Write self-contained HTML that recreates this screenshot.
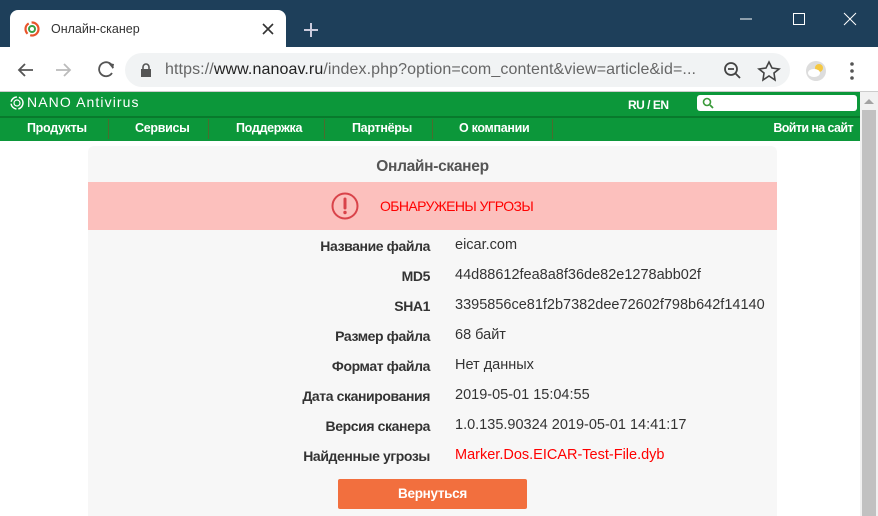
<!DOCTYPE html>
<html><head><meta charset="utf-8"><style>
*{margin:0;padding:0;box-sizing:border-box}
body{width:878px;height:516px;overflow:hidden;font-family:"Liberation Sans",sans-serif;background:#fff;position:relative}
.abs{position:absolute}
.top{left:0;top:0;width:878px;height:47px;background:#1e3f5a}
.tab{left:10px;top:10px;width:276px;height:37px;background:#fff;border-radius:8px 8px 0 0}
.tab span{position:absolute;left:41px;top:12px;font-size:12.5px;color:#333}
.tb{left:0;top:47px;width:878px;height:45px;background:#fff;border-bottom:1px solid #ccc}
.omni{left:125px;top:53px;width:665px;height:34px;background:#f1f3f4;border-radius:17px}
.url{left:165px;top:61px;font-size:16px;color:#666;letter-spacing:0.1px}
.url b{font-weight:normal;color:#222}
.g1{left:0;top:92px;width:860px;height:24px;background:#0c973a}
.g2{left:0;top:116px;width:860px;height:25px;background:#0c973a;border-top:2px solid #087a2c}
.nav{top:121px;font-size:12.5px;color:#fff;font-weight:bold;letter-spacing:-0.3px}
.sep{top:119px;width:1px;height:20px;background:#4a6d2e}
.sb{left:860px;top:92px;width:18px;height:424px;background:#f1f1f1}
.thumb{left:862px;top:110px;width:14px;height:406px;background:#c1c1c1}
.card{left:88px;top:146px;width:689px;height:370px;background:#f7f7f7;border-radius:6px 6px 0 0}
.pink{left:88px;top:182px;width:689px;height:48px;background:#fcc0bd}
.lbl{width:430px;left:0;text-align:right;font-size:14px;font-weight:bold;color:#333;letter-spacing:-0.4px}
.val{left:455px;font-size:14.5px;color:#333;letter-spacing:0}
.btn{left:338px;top:479px;width:189px;height:30px;background:#f26f3e;border-radius:2px;color:#fff;font-weight:bold;font-size:13.5px;text-align:center;line-height:30px;letter-spacing:-0.3px}
</style></head><body>
<div class="abs top"></div>
<div class="abs tab"><svg class="abs" style="left:14px;top:11px" width="16" height="16" viewBox="0 0 16 16"><circle cx="8" cy="8" r="6.5" fill="none" stroke="#e8542b" stroke-width="2.2" stroke-dasharray="12 3"/><circle cx="8" cy="8" r="3" fill="none" stroke="#3aa045" stroke-width="2"/></svg><span>Онлайн-сканер</span>
<svg class="abs" style="left:252px;top:13px" width="12" height="12"><path d="M1 1L11 11M11 1L1 11" stroke="#333" stroke-width="1.6"/></svg></div>
<svg class="abs" style="left:303px;top:22px" width="16" height="16"><path d="M8 1V15M1 8H15" stroke="#ccd" stroke-width="2"/></svg>
<svg class="abs" style="left:738px;top:12px" width="130" height="14"><path d="M2 7H14" stroke="#fff" stroke-width="1"/><rect x="55.5" y="1.5" width="11" height="11" fill="none" stroke="#fff"/><path d="M106 1L118 13M118 1L106 13" stroke="#fff"/></svg>
<div class="abs tb"></div>
<svg class="abs" style="left:16px;top:60px" width="100" height="20"><path d="M17 10H3M9 4L3 10L9 16" fill="none" stroke="#555" stroke-width="1.8"/><path d="M40 10H54M48 4L54 10L48 16" fill="none" stroke="#bbb" stroke-width="1.8"/><path d="M97 8A7 7 0 1 0 96 13" fill="none" stroke="#555" stroke-width="1.8"/><path d="M92 3L98 4L97 9Z" fill="#555"/></svg>
<div class="abs omni"></div>
<svg class="abs" style="left:140px;top:63px" width="12" height="14"><rect x="1" y="6" width="10" height="8" fill="#555"/><path d="M3 6V4A3 3 0 0 1 9 4V6" fill="none" stroke="#555" stroke-width="1.6"/></svg>
<div class="abs url">https://<b>www.nanoav.ru</b>/index.php?option=com_content&amp;view=article&amp;id=...</div>
<svg class="abs" style="left:722px;top:60px" width="140" height="22"><circle cx="9" cy="9" r="6" fill="none" stroke="#444" stroke-width="1.8"/><path d="M6 9H12M13 13L18 18" stroke="#444" stroke-width="1.8"/><path d="M47 2L50 8L57 9L52 13L53 20L47 16L41 20L42 13L37 9L44 8Z" fill="none" stroke="#444" stroke-width="1.6"/><circle cx="94" cy="11" r="10" fill="#ddd"/><circle cx="97" cy="8" r="4" fill="#f5c842"/><ellipse cx="92" cy="13" rx="6" ry="4" fill="#fff"/><circle cx="130" cy="4" r="1.8" fill="#555"/><circle cx="130" cy="11" r="1.8" fill="#555"/><circle cx="130" cy="18" r="1.8" fill="#555"/></svg>
<div class="abs g1"></div>
<svg class="abs" style="left:9px;top:95px" width="16" height="16"><circle cx="8" cy="8" r="6" fill="none" stroke="#fff" stroke-width="1.5" stroke-dasharray="8 2"/><circle cx="8" cy="8" r="3" fill="none" stroke="#fff" stroke-width="1.2"/></svg>
<div class="abs" style="left:27px;top:94px;font-size:14px;color:#fff;letter-spacing:1.1px">NANO Antivirus</div>
<div class="abs" style="left:628px;top:98px;font-size:12px;color:#fff;font-weight:bold;letter-spacing:-0.5px">RU / EN</div>
<div class="abs" style="left:697px;top:95px;width:160px;height:16px;background:#fff;border-radius:3px"></div>
<svg class="abs" style="left:702px;top:97px" width="12" height="12"><circle cx="5" cy="5" r="3.5" fill="none" stroke="#3a9a3a" stroke-width="1.6"/><path d="M8 8L11 11" stroke="#3a9a3a" stroke-width="1.8"/></svg>
<div class="abs g2"></div>
<div class="abs nav" style="left:27px">Продукты</div>
<div class="abs sep" style="left:108px"></div>
<div class="abs nav" style="left:135px">Сервисы</div>
<div class="abs sep" style="left:208px"></div>
<div class="abs nav" style="left:236px">Поддержка</div>
<div class="abs sep" style="left:324px"></div>
<div class="abs nav" style="left:352px">Партнёры</div>
<div class="abs sep" style="left:432px"></div>
<div class="abs nav" style="left:459px">О компании</div>
<div class="abs sep" style="left:552px"></div>
<div class="abs nav" style="right:25px;letter-spacing:-0.6px">Войти на сайт</div>
<div class="abs sb"></div>
<svg class="abs" style="left:863px;top:97px" width="12" height="8"><path d="M1 7L6 2L11 7Z" fill="#a3a3a3"/></svg>
<div class="abs thumb"></div>
<div class="abs card"></div>
<div class="abs" style="left:88px;width:689px;top:158px;text-align:center;font-size:15.5px;font-weight:bold;color:#555;letter-spacing:-0.3px">Онлайн-сканер</div>
<div class="abs pink"></div>
<svg class="abs" style="left:331px;top:192px" width="28" height="28"><circle cx="14" cy="14" r="12.5" fill="none" stroke="#d9434a" stroke-width="2"/><path d="M14 7V16" stroke="#d9434a" stroke-width="3" stroke-linecap="round"/><circle cx="14" cy="20.5" r="1.7" fill="#d9434a"/></svg>
<div class="abs" style="left:380px;top:198px;font-size:14px;color:#f00;letter-spacing:-0.6px">ОБНАРУЖЕНЫ УГРОЗЫ</div>
<div class="abs lbl" style="top:238px">Название файла</div><div class="abs val" style="top:237px">eicar.com</div>
<div class="abs lbl" style="top:268px">MD5</div><div class="abs val" style="top:267px">44d88612fea8a8f36de82e1278abb02f</div>
<div class="abs lbl" style="top:298px">SHA1</div><div class="abs val" style="top:297px">3395856ce81f2b7382dee72602f798b642f14140</div>
<div class="abs lbl" style="top:328px">Размер файла</div><div class="abs val" style="top:327px">68 байт</div>
<div class="abs lbl" style="top:358px">Формат файла</div><div class="abs val" style="top:357px">Нет данных</div>
<div class="abs lbl" style="top:388px">Дата сканирования</div><div class="abs val" style="top:387px">2019-05-01 15:04:55</div>
<div class="abs lbl" style="top:418px">Версия сканера</div><div class="abs val" style="top:417px">1.0.135.90324 2019-05-01 14:41:17</div>
<div class="abs lbl" style="top:448px">Найденные угрозы</div><div class="abs val" style="top:447px;color:#f00">Marker.Dos.EICAR-Test-File.dyb</div>
<div class="abs btn">Вернуться</div>
</body></html>
